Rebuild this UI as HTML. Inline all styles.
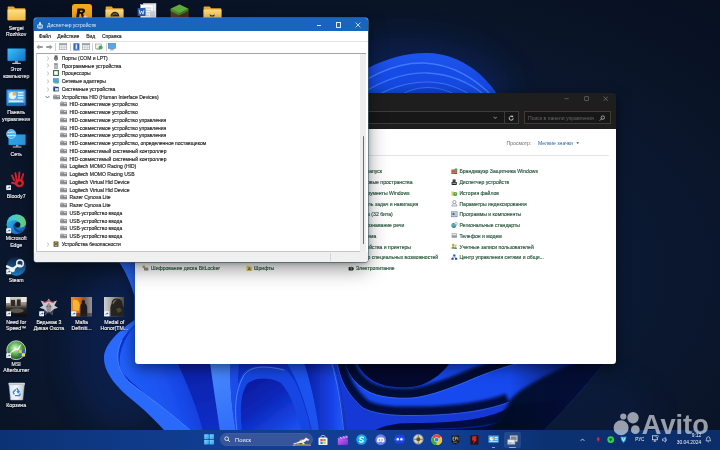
<!DOCTYPE html>
<html lang="ru">
<head>
<meta charset="utf-8">
<title>Desktop</title>
<style>
html,body{margin:0;padding:0;}
body{width:720px;height:450px;overflow:hidden;position:relative;background:#08142a;font-family:"Liberation Sans",sans-serif;}
.abs{position:absolute;}
#stage{position:absolute;left:0;top:0;width:720px;height:450px;overflow:hidden;filter:blur(0.38px);}
#wall{position:absolute;left:0;top:0;width:720px;height:450px;}
.dl{position:absolute;width:44px;text-align:center;color:#f2f4f8;font-size:5.2px;line-height:6.8px;white-space:nowrap;text-shadow:0 0 1px #000,0 0.5px 1px #000;-webkit-text-stroke:0.15px #f2f4f8;}
#dm{position:absolute;left:34px;top:18.2px;width:333.8px;height:244.2px;background:#fff;border-radius:3px;box-shadow:0 7px 20px rgba(0,0,0,0.42),0 1px 5px rgba(0,0,0,0.25),0 0 0 0.7px rgba(100,150,170,0.85);overflow:hidden;}
#dm .tb{position:absolute;left:0;top:0;width:100%;height:13px;background:#1766bd;}
#dm .title{position:absolute;left:13px;top:4.2px;font-size:5px;line-height:6px;color:#e4eefb;white-space:nowrap;}
#dm .menu{position:absolute;font-size:5px;line-height:6px;color:#1c1c1c;white-space:nowrap;-webkit-text-stroke:0.15px #1c1c1c;}
#dm .row{position:absolute;font-size:5px;line-height:6px;color:#242424;white-space:nowrap;-webkit-text-stroke:0.15px #242424;}
#cp{position:absolute;left:134.5px;top:93px;width:481.3px;height:270.5px;background:linear-gradient(#1e1e1e 0,#1e1e1e 36px,#fff 36px,#fff 100%);border-radius:3.5px;box-shadow:0 4px 14px rgba(0,0,0,0.5);overflow:hidden;}
#cp .hd{position:absolute;left:0;top:0;width:100%;height:36px;background:#1e1e1e;}
#cp .it{position:absolute;font-size:5.1px;line-height:6px;color:#28563c;white-space:nowrap;-webkit-text-stroke:0.15px #28563c;}
#tb{position:absolute;left:0;top:430px;width:720px;height:20px;background:linear-gradient(90deg,#0c3274 0%,#0f3a88 18%,#113e94 32%,#113e94 62%,#0c3172 76%,#0b2d69 100%);}
#tb .t{position:absolute;color:#eef2fa;font-size:4.9px;line-height:6px;white-space:nowrap;}
</style>
</head>
<body>
<div id="stage">
<svg id="wall" viewBox="0 0 720 450">
<defs>
<radialGradient id="bgG" cx="0.5" cy="0.6" r="0.8">
<stop offset="0" stop-color="#0c2250"/><stop offset="0.38" stop-color="#0b1a36"/><stop offset="0.7" stop-color="#0a1529"/><stop offset="1" stop-color="#070f1f"/>
</radialGradient>
</defs>
<rect width="720" height="450" fill="url(#bgG)"/>
<defs>
<filter id="b05" x="-10%" y="-10%" width="120%" height="120%"><feGaussianBlur stdDeviation="0.45"/></filter>
<filter id="b1" x="-10%" y="-10%" width="120%" height="120%"><feGaussianBlur stdDeviation="0.7"/></filter>
<filter id="b2" x="-20%" y="-20%" width="140%" height="140%"><feGaussianBlur stdDeviation="1.8"/></filter>
<filter id="b3" x="-30%" y="-30%" width="160%" height="160%"><feGaussianBlur stdDeviation="3"/></filter>
<filter id="b12" x="-30%" y="-30%" width="160%" height="160%"><feGaussianBlur stdDeviation="14"/></filter>
<linearGradient id="domeG" x1="0" y1="0" x2="0" y2="1"><stop offset="0" stop-color="#1d54ee"/><stop offset="1" stop-color="#1443dc"/></linearGradient>
<linearGradient id="archIn" x1="0.1" y1="0" x2="0.9" y2="1"><stop offset="0" stop-color="#091a9c"/><stop offset="0.45" stop-color="#0c28bc"/><stop offset="1" stop-color="#1c50f4"/></linearGradient>
<linearGradient id="leftBand" x1="0" y1="0" x2="1" y2="0.6"><stop offset="0" stop-color="#1c54ec"/><stop offset="1" stop-color="#2c6cff"/></linearGradient>
<linearGradient id="midG" x1="0.2" y1="0" x2="0.7" y2="1"><stop offset="0" stop-color="#0a25b2"/><stop offset="0.5" stop-color="#0f36d4"/><stop offset="1" stop-color="#1d54f4"/></linearGradient>
<linearGradient id="st1" x1="0" y1="0" x2="1" y2="0"><stop offset="0" stop-color="#0a1fa2"/><stop offset="0.75" stop-color="#1844e8"/><stop offset="1" stop-color="#2458f6"/></linearGradient>
<linearGradient id="st2" x1="0" y1="0" x2="1" y2="0"><stop offset="0" stop-color="#1e50f2"/><stop offset="1" stop-color="#08187c"/></linearGradient>
<linearGradient id="fadeR" x1="0" y1="0" x2="1" y2="0"><stop offset="0" stop-color="#050c36" stop-opacity="0"/><stop offset="0.5" stop-color="#050c38" stop-opacity="0.6"/><stop offset="1" stop-color="#060f34" stop-opacity="0.9"/></linearGradient>
<linearGradient id="petL" gradientUnits="userSpaceOnUse" x1="125" y1="400" x2="195" y2="375"><stop offset="0" stop-color="#2262fa"/><stop offset="0.6" stop-color="#1a50ee"/><stop offset="1" stop-color="#1238d6"/></linearGradient>
<linearGradient id="dkB" gradientUnits="userSpaceOnUse" x1="190" y1="360" x2="210" y2="431"><stop offset="0" stop-color="#0a20a6"/><stop offset="1" stop-color="#0d2ec8"/></linearGradient>
<linearGradient id="ltP" gradientUnits="userSpaceOnUse" x1="212" y1="360" x2="234" y2="431"><stop offset="0" stop-color="#4a8cff"/><stop offset="1" stop-color="#2f6cf8"/></linearGradient>
<clipPath id="clipR"><path d="M330 255 L605 255 L605 362 C584 388,562 412,543 431 L347 431 C345 405,339 380,333 362 Z"/></clipPath>
</defs>
<!-- glow behind bloom -->
<ellipse cx="405" cy="90" rx="105" ry="52" fill="#0b2f86" opacity="0.34" filter="url(#b12)"/>
<ellipse cx="120" cy="350" rx="50" ry="80" fill="#0c2f80" opacity="0.3" filter="url(#b12)"/>
<ellipse cx="585" cy="415" rx="70" ry="40" fill="#0c2860" opacity="0.18" filter="url(#b12)"/>
<!-- top dome -->
<g filter="url(#b05)">
<path d="M330 100 C345 76,388 52,428 53 C456 54,481 69,499 97 Z" fill="url(#domeG)"/>
<path d="M340 100 C362 78,395 62,424 63 C452 64,476 79,493 97" fill="#184ce6" stroke="#4279fa" stroke-width="1.4"/>
<path d="M352 100 C375 84,400 72,427 73 C452 74,472 84,487 97" fill="#1648e2" stroke="#3f76f8" stroke-width="1.3"/>
<path d="M368 100 C388 89,405 82,427 82 C447 82,462 89,474 97" fill="#1444dc" stroke="#3c72f5" stroke-width="1.2"/>
<path d="M392 100 C405 91,415 87.5,427 87.5 C440 87.5,450 91,460 97" fill="#123ed4" stroke="#396df0" stroke-width="1.1"/>
</g>
<!-- bottom bloom: left part -->
<g filter="url(#b05)">
<path d="M119 262 C126 272,131 284,134.5 296 L134.5 320 C120 330,104 344,104 358 C104 373,118 388,130 398 C145 410,155 420,165 431 L350 431 L340 262 Z" fill="#0d33d4"/>
<!-- outer band -->
<path d="M119 262 C126 272,131 284,134.5 296 L134.5 320 C120 330,104 344,104 358 C104 373,118 388,130 398 C145 410,155 420,165 431 L191 431 C172 414,150 398,130 383 C118 372,114 356,122 340 C128 330,136 324,140 320 L140 262 Z" fill="#2b6afb"/>
<!-- inner bright petal -->
<path d="M140 300 L140 320 C128 330,114 356,122 372 C126 378,150 398,191 431 L203 431 C198 410,188 385,174 355 L160 300 Z" fill="url(#petL)"/>
<path d="M122 340 C114 356,118 372,130 383 C150 398,172 414,191 431" fill="none" stroke="#5a94ff" stroke-width="0.9" opacity="0.75"/>
<!-- dark band -->
<path d="M174 355 C188 385,198 410,203 431 L220 431 C217 410,213 385,209 355 Z" fill="url(#dkB)"/>
<!-- light petal -->
<path d="M209 355 C213 385,217 410,220 431 L236 431 C232 410,229 385,231 355 Z" fill="url(#ltP)"/>
<path d="M231 355 C229 385,232 410,236 431 L242 431 C238 410,236 385,240 355 Z" fill="#1d4eea"/>
<!-- arch -->
<path d="M236 431 C233 410,233 392,242 375 C248 366,260 363,285 369 C296 378,304 400,311 431 Z" fill="#1946e4"/>
<path d="M237 431 C234.5 410,234.5 392,243.5 376 C249 367,262 364.5,284 370" fill="none" stroke="#4a86ff" stroke-width="1"/>
<path d="M242 431 C240 410,240 395,247 384 C254 377,270 377,281 383 C291 394,297 412,301 431 Z" fill="url(#archIn)"/>
<!-- strips right of arch -->
<path d="M286 362 C297 378,305 400,312 431 L320 431 C316 405,310 380,304 362 Z" fill="#1f52ee"/>
<path d="M304 362 C310 380,316 405,319 431 L343 431 C341 405,336 380,331 362 Z" fill="url(#st1)"/>
<path d="M331 362 C336 380,341 405,343 431 L358 431 C354 405,349 380,345 362 Z" fill="url(#st2)"/>
<path d="M331.5 362 C336.5 380,341.5 405,343.5 431" fill="none" stroke="#4a80ff" stroke-width="0.8"/>
</g>
<!-- right region: nested bowls -->
<g clip-path="url(#clipR)">
<rect x="330" y="255" width="280" height="180" fill="#04092e"/>
<!-- ridge a -->
<path d="M354 355 C358 370,368 381,385 385.5 C397 388,412 388,421 385 C434 380,444 372,452 360 L610 355 L610 435 L330 435 L330 355 Z" fill="#1846ea" filter="url(#b05)"/>
<!-- shadow above rim b -->
<path d="M343 355 C346 372,353 383,368 391.5 C378 397,395 399,413 398 C430 396,452 388,475 378 C492 371,512 364,540 358" fill="none" stroke="#040a34" stroke-width="20" filter="url(#b2)"/>
<!-- ridge b -->
<path d="M343 355 C346 372,353 383,368 391.5 C378 397,395 399,413 398 C430 396,452 388,475 378 C492 371,512 364,540 358 L610 355 L610 435 L330 435 L330 355 Z" fill="#1848ee" filter="url(#b05)"/>
<path d="M343 355 C346 372,353 383,368 391.5 C378 397,395 399,413 398 C430 396,452 388,475 378 C492 371,512 364,540 358" fill="none" stroke="#3a6cff" stroke-width="0.9" filter="url(#b05)"/>
<!-- shadow above rim c -->
<path d="M336 355 C339 378,345 392,363 408 C372 413,390 416,413 415.5 C435 415.5,462 414,483 409.5 C495 407,503 404.5,509 402" fill="none" stroke="#050c3c" stroke-width="18" filter="url(#b2)"/>
<!-- ridge c -->
<path d="M336 355 C339 378,345 392,363 408 C372 413,390 416,413 415.5 C435 415.5,462 414,483 409.5 C495 407,503 404.5,509 402 L560 402 L560 435 L330 435 L330 355 Z" fill="#1238d4" filter="url(#b05)"/>
<path d="M336 355 C339 378,345 392,363 408 C372 413,390 416,413 415.5 C435 415.5,462 414,483 409.5 C495 407,503 404.5,509 402" fill="none" stroke="#3566fa" stroke-width="0.8" filter="url(#b05)"/>
<!-- dark bottom under ridge c -->
<path d="M366 437 C376 427,392 423,413 423 C440 423,465 421.5,486 416.5 C498 413.5,506 410,512 405 L565 400 L565 437 Z" fill="#050c40" filter="url(#b1)"/>
<path d="M380 437 C392 431,420 429,450 428.5 C480 428,500 424,520 414" fill="none" stroke="#0d2fb8" stroke-width="1.2" opacity="0.6" filter="url(#b1)"/>
<!-- right fade to dark -->
<path d="M509 402 C515 392,538 378,585 358 L610 355 L610 435 L480 435 C495 425,505 412,509 402 Z" fill="#040926" opacity="0.94" filter="url(#b2)"/>
<rect x="510" y="355" width="100" height="80" fill="url(#fadeR)"/>
</g>

</svg>
<!--ICONS-->
<svg class="abs" style="left:6.80px;top:6.00px" width="19" height="15" viewBox="0 0 19 15"><defs><linearGradient id="fg00" x1="0" y1="0" x2="0" y2="1"><stop offset="0" stop-color="#ffe08a"/><stop offset="1" stop-color="#f3bb3e"/></linearGradient></defs><path d="M0.6 1.4Q0.6 0.5 1.5 0.5H6.5L8.3 2.3H17.5Q18.4 2.3 18.4 3.2V13.4Q18.4 14.3 17.5 14.3H1.5Q0.6 14.3 0.6 13.4Z" fill="#e9a92c"/><path d="M0.6 4.3Q0.6 3.4 1.5 3.4H17.5Q18.4 3.4 18.4 4.3V13.4Q18.4 14.3 17.5 14.3H1.5Q0.6 14.3 0.6 13.4Z" fill="url(#fg00)"/></svg>
<div class="dl" style="left:-5.80px;top:24.60px">Sergei<br>Rozhkov</div>
<svg class="abs" style="left:6.80px;top:48.00px" width="19" height="17" viewBox="0 0 19 17"><defs><linearGradient id="pcg" x1="0" y1="0" x2="1" y2="1"><stop offset="0" stop-color="#39c2f5"/><stop offset="1" stop-color="#1479d4"/></linearGradient></defs><rect x="0.5" y="0.5" width="18" height="12.4" rx="0.8" fill="url(#pcg)" stroke="#1a5fa8" stroke-width="0.5"/><rect x="8" y="12.9" width="3" height="2" fill="#8fa0b0"/><rect x="5.2" y="14.8" width="8.6" height="1.2" rx="0.5" fill="#b8c4d0"/></svg>
<div class="dl" style="left:-5.80px;top:66.40px">Этот<br>компьютер</div>
<svg class="abs" style="left:6.20px;top:89.40px" width="20.4" height="17.4" viewBox="0 0 20.4 17.4"><rect x="0.5" y="0.5" width="19.4" height="16.2" rx="1" fill="#2e86d6" stroke="#1b5fae" stroke-width="0.6"/><rect x="1.8" y="1.8" width="16.8" height="12.4" fill="#5fb6ee"/><circle cx="6.6" cy="6.6" r="3.6" fill="#e9f4fc"/><path d="M6.6 6.6V3A3.6 3.6 0 0 1 10.2 6.6Z" fill="#f0b63a"/><rect x="12" y="3" width="5.4" height="1.4" fill="#e6f2fb"/><rect x="12" y="5.6" width="5.4" height="1.4" fill="#e6f2fb"/><rect x="12" y="8.2" width="5.4" height="1.4" fill="#e6f2fb"/><rect x="3" y="11.4" width="14" height="1.6" fill="#d9ecf9"/><rect x="1.8" y="14.2" width="16.8" height="1.6" fill="#1d63b4"/></svg>
<div class="dl" style="left:-5.80px;top:109.40px">Панель<br>управления</div>
<svg class="abs" style="left:6.20px;top:129.20px" width="20.4" height="19.4" viewBox="0 0 20.4 19.4"><rect x="2.6" y="5.4" width="17" height="10.6" rx="0.8" fill="#2f9fe6" stroke="#1a6bb8" stroke-width="0.5"/><rect x="10" y="16" width="2.4" height="1.6" fill="#90a0b0"/><rect x="6.6" y="17.4" width="9" height="1.2" rx="0.5" fill="#c0ccd8"/><circle cx="5.2" cy="5" r="4.6" fill="#4db4ee"/><path d="M2 3.2C4 4.6 6 2 8.4 3.4M1.4 6.4C3.6 7.6 6.6 5.4 9.2 6.6" stroke="#d8f0fc" stroke-width="1" fill="none"/><circle cx="5.2" cy="5" r="4.6" fill="none" stroke="#bfe4f8" stroke-width="0.6"/></svg>
<div class="dl" style="left:-5.80px;top:150.60px">Сеть</div>
<svg class="abs" style="left:7.60px;top:170.80px" width="19" height="19" viewBox="0 0 19 19"><g fill="#d8222c"><ellipse cx="11.4" cy="12" rx="4.6" ry="4.2"/><rect x="4.2" y="3.4" width="1.9" height="7" rx="0.9" transform="rotate(-24 5.2 7)"/><rect x="7" y="1.2" width="1.9" height="8.6" rx="0.9" transform="rotate(-10 8 5.4)"/><rect x="10.2" y="0.6" width="1.9" height="8.6" rx="0.9" transform="rotate(4 11.2 5)"/><rect x="13.4" y="2" width="1.9" height="7.6" rx="0.9" transform="rotate(18 14.4 6)"/><rect x="3" y="11.2" width="6" height="2" rx="1" transform="rotate(14 6 12.2)"/></g><circle cx="11.6" cy="12.2" r="1.8" fill="#0a1628"/></svg>
<svg class="abs" style="left:6.00px;top:184.80px" width="5.4" height="5.4" viewBox="0 0 5.4 5.4"><rect x="0.2" y="0.2" width="5" height="5" rx="0.6" fill="#f4f6fa"/><path d="M1.4 4.2C1.5 2.8 2.3 2 3.4 2V1.2L4.6 2.5L3.4 3.8V3C2.6 3 1.9 3.4 1.4 4.2Z" fill="#2a6fd0"/></svg>
<div class="dl" style="left:-5.80px;top:192.60px">Bloody7</div>
<svg class="abs" style="left:6.00px;top:213.80px" width="20.6" height="20.6" viewBox="0 0 20.6 20.6"><defs><linearGradient id="eg1" x1="0" y1="0" x2="1" y2="1"><stop offset="0" stop-color="#36c4d8"/><stop offset="0.5" stop-color="#1f8fd8"/><stop offset="1" stop-color="#1554b0"/></linearGradient><linearGradient id="eg2" x1="0" y1="0" x2="1" y2="0"><stop offset="0" stop-color="#35c1f1"/><stop offset="1" stop-color="#6fdc7a"/></linearGradient></defs><circle cx="10.3" cy="10.3" r="9.8" fill="url(#eg1)"/><path d="M1 9C2 3.6 6.4 0.5 10.8 0.5C16 0.5 20 4.4 20 8.8C20 11.6 17.8 13.4 15.2 13.4C13 13.4 12.2 12.2 12.6 11.2C13.4 9.6 12.8 6.6 9.4 6.2C5.4 5.8 2 7.4 1 9Z" fill="url(#eg2)"/><path d="M8.2 9.4C6.6 12 7.6 16 11 18C13.6 19.2 16.6 18.4 18.4 16C15 17.4 11 16.6 9.6 13.6C9 12.2 9 10.8 9.8 9.6Z" fill="#0f4a98"/><circle cx="11.6" cy="10.8" r="2.8" fill="#0c1a30"/></svg>
<svg class="abs" style="left:5.80px;top:228.20px" width="5.4" height="5.4" viewBox="0 0 5.4 5.4"><rect x="0.2" y="0.2" width="5" height="5" rx="0.6" fill="#f4f6fa"/><path d="M1.4 4.2C1.5 2.8 2.3 2 3.4 2V1.2L4.6 2.5L3.4 3.8V3C2.6 3 1.9 3.4 1.4 4.2Z" fill="#2a6fd0"/></svg>
<div class="dl" style="left:-5.80px;top:234.80px">Microsoft<br>Edge</div>
<svg class="abs" style="left:6.00px;top:255.80px" width="20.6" height="20.6" viewBox="0 0 20.6 20.6"><defs><linearGradient id="stg" x1="0" y1="0" x2="0" y2="1"><stop offset="0" stop-color="#111d3e"/><stop offset="1" stop-color="#1a7fc0"/></linearGradient></defs><circle cx="10.3" cy="10.3" r="9.6" fill="url(#stg)"/><path d="M0.8 10.4L7 13.2L11.4 9.4L14.4 9.6" stroke="#f2f4f8" stroke-width="2.4" fill="none" stroke-linecap="round"/><circle cx="14" cy="7.4" r="3.3" fill="none" stroke="#f2f4f8" stroke-width="1.5"/><circle cx="6.6" cy="13.8" r="2.4" fill="#f2f4f8"/></svg>
<svg class="abs" style="left:5.80px;top:269.40px" width="5.4" height="5.4" viewBox="0 0 5.4 5.4"><rect x="0.2" y="0.2" width="5" height="5" rx="0.6" fill="#f4f6fa"/><path d="M1.4 4.2C1.5 2.8 2.3 2 3.4 2V1.2L4.6 2.5L3.4 3.8V3C2.6 3 1.9 3.4 1.4 4.2Z" fill="#2a6fd0"/></svg>
<div class="dl" style="left:-5.80px;top:277.00px">Steam</div>
<svg class="abs" style="left:6.00px;top:297.00px" width="20.6" height="19.6" viewBox="0 0 20.6 19.6"><defs><linearGradient id="nfg" x1="0" y1="0" x2="0" y2="1"><stop offset="0" stop-color="#d8d4cc"/><stop offset="0.38" stop-color="#8a8478"/><stop offset="0.6" stop-color="#2a2622"/><stop offset="1" stop-color="#0c0c0e"/></linearGradient></defs><rect width="20.6" height="19.6" fill="url(#nfg)"/><rect x="0" y="0" width="4" height="6" fill="#f4f2ee"/><rect x="15" y="0" width="5.6" height="5" fill="#e8e6e0"/><path d="M5 3H9V9H5ZM11 2.4H14.6V9H11Z" fill="#2e2a26"/><ellipse cx="10.8" cy="13.6" rx="7" ry="2.4" fill="#5a5650"/></svg>
<svg class="abs" style="left:6.00px;top:311.20px" width="5.4" height="5.4" viewBox="0 0 5.4 5.4"><rect x="0.2" y="0.2" width="5" height="5" rx="0.6" fill="#f4f6fa"/><path d="M1.4 4.2C1.5 2.8 2.3 2 3.4 2V1.2L4.6 2.5L3.4 3.8V3C2.6 3 1.9 3.4 1.4 4.2Z" fill="#2a6fd0"/></svg>
<div class="dl" style="left:-5.80px;top:318.60px">Need for<br>Speed™</div>
<svg class="abs" style="left:39.10px;top:298.00px" width="19.6" height="19" viewBox="0 0 19.6 19"><path d="M9.8 0.8L12.6 4.4L18 2.6L15.4 7.6L19 9.8L14.6 11.2L13.2 17L9.8 13.6L6.4 17L5 11.2L0.6 9.8L4.2 7.6L1.6 2.6L7 4.4Z" fill="#c4c8d0"/><path d="M9.8 4.6L12.6 8.4L11.6 13.4L9.8 15.4L8 13.4L7 8.4Z" fill="#8e929c"/><path d="M5 11.2L6.4 17L9.8 13.6L13.2 17L14.6 11.2L9.8 15.4Z" fill="#3a3c44"/><circle cx="8.4" cy="8.4" r="0.8" fill="#e0322a"/><circle cx="11.2" cy="8.4" r="0.8" fill="#e0322a"/><path d="M4.6 4.4L9.8 2.8L15 4.4" stroke="#c0384a" stroke-width="1.1" fill="none"/></svg>
<svg class="abs" style="left:39.10px;top:311.20px" width="5.4" height="5.4" viewBox="0 0 5.4 5.4"><rect x="0.2" y="0.2" width="5" height="5" rx="0.6" fill="#f4f6fa"/><path d="M1.4 4.2C1.5 2.8 2.3 2 3.4 2V1.2L4.6 2.5L3.4 3.8V3C2.6 3 1.9 3.4 1.4 4.2Z" fill="#2a6fd0"/></svg>
<div class="dl" style="left:26.90px;top:318.60px">Ведьмак 3<br>Дикая Охота</div>
<svg class="abs" style="left:71.00px;top:297.20px" width="21.2" height="19.4" viewBox="0 0 21.2 19.4"><defs><linearGradient id="mfg" x1="0" y1="0" x2="1" y2="0"><stop offset="0" stop-color="#f08a22"/><stop offset="0.4" stop-color="#d8641c"/><stop offset="0.62" stop-color="#7a5a4a"/><stop offset="1" stop-color="#8a9aa8"/></linearGradient></defs><rect width="21.2" height="19.4" fill="url(#mfg)"/><path d="M2 4C3.6 1 5 5 6 2.4C7.4 5.6 8.4 3.6 8.8 8L8 14L2 13Z" fill="#f8c23a" opacity="0.85"/><path d="M9.4 19.4V10C9.4 7.6 10.2 6.6 11 6.2C10.4 4.8 10.8 3 12.4 3C14 3 14.4 4.8 13.8 6.2C15 6.8 16 8 16.2 10.4V19.4Z" fill="#1c1a1c"/><rect x="0" y="16" width="21.2" height="3.4" fill="#2a2420" opacity="0.55"/></svg>
<svg class="abs" style="left:71.20px;top:311.20px" width="5.4" height="5.4" viewBox="0 0 5.4 5.4"><rect x="0.2" y="0.2" width="5" height="5" rx="0.6" fill="#f4f6fa"/><path d="M1.4 4.2C1.5 2.8 2.3 2 3.4 2V1.2L4.6 2.5L3.4 3.8V3C2.6 3 1.9 3.4 1.4 4.2Z" fill="#2a6fd0"/></svg>
<div class="dl" style="left:59.60px;top:318.60px">Mafia<br>Definiti...</div>
<svg class="abs" style="left:104.10px;top:297.20px" width="20.4" height="19.4" viewBox="0 0 20.4 19.4"><defs><linearGradient id="mhg" x1="0" y1="0" x2="1" y2="0"><stop offset="0" stop-color="#d2d0cc"/><stop offset="0.35" stop-color="#a8a6a2"/><stop offset="1" stop-color="#4a4844"/></linearGradient></defs><rect width="20.4" height="19.4" fill="url(#mhg)"/><path d="M6.4 19.4V13C6 10 7 8 7.6 6.4C7.6 3 10 1.2 13 1.4C16.6 1.6 18.6 4 18.4 7C19.6 9 20.4 12 20.4 14V19.4Z" fill="#26241f"/><path d="M8.4 6.2C9 3.6 11 2.4 13.4 2.6C12 3.6 10.4 5 9.6 7.6Z" fill="#6a6456"/><path d="M12 12L16 10.6L18 14L14 16Z" fill="#4a4636"/></svg>
<svg class="abs" style="left:104.10px;top:311.20px" width="5.4" height="5.4" viewBox="0 0 5.4 5.4"><rect x="0.2" y="0.2" width="5" height="5" rx="0.6" fill="#f4f6fa"/><path d="M1.4 4.2C1.5 2.8 2.3 2 3.4 2V1.2L4.6 2.5L3.4 3.8V3C2.6 3 1.9 3.4 1.4 4.2Z" fill="#2a6fd0"/></svg>
<div class="dl" style="left:92.30px;top:318.60px">Medal of<br>Honor(TM...</div>
<svg class="abs" style="left:6.20px;top:339.60px" width="20.4" height="20.4" viewBox="0 0 20.4 20.4"><defs><radialGradient id="msg" cx="0.45" cy="0.4" r="0.6"><stop offset="0" stop-color="#e8f4e0"/><stop offset="0.45" stop-color="#6ac05a"/><stop offset="1" stop-color="#1c4a1e"/></radialGradient></defs><circle cx="10.2" cy="10.2" r="9.4" fill="url(#msg)" stroke="#c8ccd0" stroke-width="1"/><path d="M3 14L9 8L11 9L15.6 3.6L12.6 10.4L10.6 9.8Z" fill="#f4f6f4"/><path d="M12.6 10H19V16.4H12.6Z" fill="#2a6ad0"/><path d="M12.6 10H15.8V13.2H12.6Z" fill="#f2c21c"/><path d="M15.8 13.2H19V16.4H15.8Z" fill="#e8e23a"/></svg>
<svg class="abs" style="left:6.00px;top:352.80px" width="5.4" height="5.4" viewBox="0 0 5.4 5.4"><rect x="0.2" y="0.2" width="5" height="5" rx="0.6" fill="#f4f6fa"/><path d="M1.4 4.2C1.5 2.8 2.3 2 3.4 2V1.2L4.6 2.5L3.4 3.8V3C2.6 3 1.9 3.4 1.4 4.2Z" fill="#2a6fd0"/></svg>
<div class="dl" style="left:-5.80px;top:360.60px">MSI<br>Afterburner</div>
<svg class="abs" style="left:7.60px;top:381.80px" width="17.4" height="19" viewBox="0 0 17.4 19"><defs><linearGradient id="rbg" x1="0" y1="0" x2="1" y2="0"><stop offset="0" stop-color="#dfe6ee"/><stop offset="0.5" stop-color="#f4f7fa"/><stop offset="1" stop-color="#b9c4d0"/></linearGradient></defs><path d="M1 2.4H16.4L14.8 18H2.6Z" fill="url(#rbg)" stroke="#9aa6b4" stroke-width="0.5"/><rect x="0.4" y="0.8" width="16.6" height="2" rx="0.6" fill="#cfd8e2"/><path d="M8.7 6.2L11 9.6H9.6L10.6 11.4M6.2 12.6L5.2 10.2L7.8 7.4M7 13.6H11.6L12.4 11.6" stroke="#2a8ae0" stroke-width="1.3" fill="none"/></svg>
<div class="dl" style="left:-5.80px;top:402.40px">Корзина</div>
<svg class="abs" style="left:71.60px;top:3.60px" width="20" height="20" viewBox="0 0 20 20"><rect width="20" height="20" rx="3" fill="#f7a81c"/><path d="M5.4 4.6H10.2C12.4 4.6 13.2 5.8 13 7.2C12.8 8.4 12 9.2 11 9.4L12.4 13.4H10L8.8 9.8H7.6L7 13.4H4.2ZM8 8H9.6C10.4 8 10.6 7.6 10.7 7.2C10.8 6.6 10.4 6.4 9.8 6.4H8.3Z" fill="#16120c"/><path d="M13 10.4L13.8 12.6H16L14.2 13.8L15 16L13.2 14.6L11.4 16L12.2 13.8L10.6 12.6H12.6Z" fill="#fdfbf5"/></svg>
<svg class="abs" style="left:104.90px;top:6.00px" width="19" height="15" viewBox="0 0 19 15"><defs><linearGradient id="fg30" x1="0" y1="0" x2="0" y2="1"><stop offset="0" stop-color="#ffe08a"/><stop offset="1" stop-color="#f3bb3e"/></linearGradient></defs><path d="M0.6 1.4Q0.6 0.5 1.5 0.5H6.5L8.3 2.3H17.5Q18.4 2.3 18.4 3.2V13.4Q18.4 14.3 17.5 14.3H1.5Q0.6 14.3 0.6 13.4Z" fill="#e9a92c"/><path d="M0.6 4.3Q0.6 3.4 1.5 3.4H17.5Q18.4 3.4 18.4 4.3V13.4Q18.4 14.3 17.5 14.3H1.5Q0.6 14.3 0.6 13.4Z" fill="url(#fg30)"/><path d="M5.4 10.4C5.8 7.2 8 5.6 10.4 5.8C12.6 6 14 7.6 14.4 10.4Z" fill="#2a2624"/><path d="M7 9.6C8 8 10 7.2 12.4 8.4" stroke="#c8a24a" stroke-width="0.8" fill="none"/></svg>
<svg class="abs" style="left:137.00px;top:3.00px" width="20" height="18" viewBox="0 0 20 18"><rect x="6.4" y="0.4" width="12.6" height="15.6" fill="#f2f5f9" stroke="#b8c2ce" stroke-width="0.5"/><rect x="3.6" y="1.6" width="12.6" height="15.6" fill="#fbfcfe" stroke="#b8c2ce" stroke-width="0.5"/><path d="M6 5H14M6 7.4H14M6 9.8H14M6 12.2H12" stroke="#a8b6c6" stroke-width="0.7"/><rect x="0.6" y="5" width="8" height="8" rx="0.8" fill="#2a5fb4"/><path d="M2.2 7L3.2 11.2L4.6 8L6 11.2L7 7" stroke="#fff" stroke-width="0.8" fill="none"/><rect x="13" y="8" width="5" height="5.6" fill="#cdd6e0"/></svg>
<svg class="abs" style="left:170.10px;top:3.60px" width="19" height="19" viewBox="0 0 19 19"><path d="M9.5 0.6L18.4 4.8V13.8L9.5 18.4L0.6 13.8V4.8Z" fill="#5a3c26"/><path d="M9.5 0.6L18.4 4.8L9.5 9.2L0.6 4.8Z" fill="#5fae3a"/><path d="M0.6 4.8L9.5 9.2V11.4L0.6 7Z" fill="#4a9230"/><path d="M18.4 4.8L9.5 9.2V11.4L18.4 7Z" fill="#3d7d28"/><path d="M9.5 11.4V18.4L18.4 13.8V7Z" fill="#4a3020"/></svg>
<svg class="abs" style="left:203.00px;top:6.00px" width="19" height="15" viewBox="0 0 19 15"><defs><linearGradient id="fg60" x1="0" y1="0" x2="0" y2="1"><stop offset="0" stop-color="#ffe08a"/><stop offset="1" stop-color="#f3bb3e"/></linearGradient></defs><path d="M0.6 1.4Q0.6 0.5 1.5 0.5H6.5L8.3 2.3H17.5Q18.4 2.3 18.4 3.2V13.4Q18.4 14.3 17.5 14.3H1.5Q0.6 14.3 0.6 13.4Z" fill="#e9a92c"/><path d="M0.6 4.3Q0.6 3.4 1.5 3.4H17.5Q18.4 3.4 18.4 4.3V13.4Q18.4 14.3 17.5 14.3H1.5Q0.6 14.3 0.6 13.4Z" fill="url(#fg60)"/><path d="M6.4 8.2L9 9.4L12 8.4L11 10.4H7.4Z" fill="#3a3228"/></svg>
<div id="cp">
<div class="hd"></div>
<svg class="abs" style="left:429.9px;top:3.4px" width="5.4" height="5.4" viewBox="0 0 5.4 5.4"><path d="M0.5 2.7H4.7" stroke="#8a8a8a" stroke-width="0.55"/></svg>
<svg class="abs" style="left:449.1px;top:3.4px" width="5.4" height="5.4" viewBox="0 0 5.4 5.4"><rect x="0.6" y="0.6" width="4" height="4" rx="0.6" fill="none" stroke="#8a8a8a" stroke-width="0.55"/></svg>
<svg class="abs" style="left:468.5px;top:3.4px" width="5.4" height="5.4" viewBox="0 0 5.4 5.4"><path d="M0.5 0.5L4.9 4.9M4.9 0.5L0.5 4.9" stroke="#929292" stroke-width="0.55"/></svg>
<div class="abs" style="left:40.5px;top:18px;width:344px;height:13.4px;box-sizing:border-box;border:0.7px solid #3d3d3d;background:#171717"></div>
<div class="abs" style="left:369.1px;top:18px;width:0.7px;height:13.4px;background:#3b3b3b"></div>
<svg class="abs" style="left:358.1px;top:23.3px" width="4.4" height="3.4" viewBox="0 0 4.4 3.4"><path d="M0.6 0.8L2.2 2.5L3.8 0.8" fill="none" stroke="#d0d0d0" stroke-width="0.7"/></svg>
<svg class="abs" style="left:373.1px;top:21.6px" width="6.4" height="6.4" viewBox="0 0 6.4 6.4"><path d="M5.2 3.2A2 2 0 1 1 4.3 1.55" fill="none" stroke="#e2e2e2" stroke-width="0.8"/><path d="M3.6 0.3L5.5 1.3L3.9 2.6Z" fill="#e2e2e2"/></svg>
<div class="abs" style="left:389.9px;top:18px;width:86.39999999999998px;height:13.4px;box-sizing:border-box;border:0.7px solid #423c30;background:#171717"></div>
<div class="abs" style="left:393.5px;top:21.8px;font-size:5.1px;line-height:6px;color:#666;white-space:nowrap">Поиск в панели управления</div>
<svg class="abs" style="left:464.7px;top:21.6px" width="6.4" height="6.4" viewBox="0 0 6.4 6.4"><circle cx="3.8" cy="2.6" r="1.7" fill="none" stroke="#c8c8c8" stroke-width="0.75"/><path d="M2.6 3.8L0.8 5.6" stroke="#c8c8c8" stroke-width="0.85"/></svg>
<div class="abs" style="left:372.1px;top:47.2px;font-size:5.1px;line-height:6px;color:#6a6a6a;white-space:nowrap">Просмотр:</div>
<div class="abs" style="left:403.5px;top:47.2px;font-size:5.1px;line-height:6px;color:#2862a6;white-space:nowrap">Мелкие значки</div>
<svg class="abs" style="left:441.7px;top:49.2px" width="3.4" height="2.4" viewBox="0 0 3.4 2.4"><path d="M0.2 0.3H3.2L1.7 2.1Z" fill="#2862a6"/></svg>
<div class="abs" style="left:7.5px;top:62.4px;width:466.6px;height:0.6px;background:#e4e6ea"></div>
<svg class="abs" style="left:7.5px;top:75.1px" width="7" height="6.6" viewBox="0 0 7 6.6"><rect x="0.5" y="0.8" width="5.6" height="4.8" rx="0.8" fill="#7a8ea6"/><rect x="2.2" y="2.4" width="4" height="3.4" rx="0.6" fill="#b8c4d0"/></svg>
<div class="it" style="left:16.5px;top:75.4px">Автозапуск</div>
<svg class="abs" style="left:7.5px;top:85.83px" width="7" height="6.6" viewBox="0 0 7 6.6"><rect x="0.5" y="0.8" width="5.6" height="4.8" rx="0.8" fill="#7a8ea6"/><rect x="2.2" y="2.4" width="4" height="3.4" rx="0.6" fill="#b8c4d0"/></svg>
<div class="it" style="left:16.5px;top:86.13px">Архивация и восстановление</div>
<svg class="abs" style="left:7.5px;top:96.56px" width="7" height="6.6" viewBox="0 0 7 6.6"><rect x="0.5" y="0.8" width="5.6" height="4.8" rx="0.8" fill="#7a8ea6"/><rect x="2.2" y="2.4" width="4" height="3.4" rx="0.6" fill="#b8c4d0"/></svg>
<div class="it" style="left:16.5px;top:96.86px">Дата и время</div>
<svg class="abs" style="left:7.5px;top:107.29px" width="7" height="6.6" viewBox="0 0 7 6.6"><rect x="0.5" y="0.8" width="5.6" height="4.8" rx="0.8" fill="#7a8ea6"/><rect x="2.2" y="2.4" width="4" height="3.4" rx="0.6" fill="#b8c4d0"/></svg>
<div class="it" style="left:16.5px;top:107.59px">Звук</div>
<svg class="abs" style="left:7.5px;top:118.02px" width="7" height="6.6" viewBox="0 0 7 6.6"><rect x="0.5" y="0.8" width="5.6" height="4.8" rx="0.8" fill="#7a8ea6"/><rect x="2.2" y="2.4" width="4" height="3.4" rx="0.6" fill="#b8c4d0"/></svg>
<div class="it" style="left:16.5px;top:118.32px">Мышь</div>
<svg class="abs" style="left:7.5px;top:128.75px" width="7" height="6.6" viewBox="0 0 7 6.6"><rect x="0.5" y="0.8" width="5.6" height="4.8" rx="0.8" fill="#7a8ea6"/><rect x="2.2" y="2.4" width="4" height="3.4" rx="0.6" fill="#b8c4d0"/></svg>
<div class="it" style="left:16.5px;top:129.05px">Параметры Проводника</div>
<svg class="abs" style="left:7.5px;top:139.48px" width="7" height="6.6" viewBox="0 0 7 6.6"><rect x="0.5" y="0.8" width="5.6" height="4.8" rx="0.8" fill="#7a8ea6"/><rect x="2.2" y="2.4" width="4" height="3.4" rx="0.6" fill="#b8c4d0"/></svg>
<div class="it" style="left:16.5px;top:139.78px">Подключения к удаленным раб...</div>
<svg class="abs" style="left:7.5px;top:150.21px" width="7" height="6.6" viewBox="0 0 7 6.6"><rect x="0.5" y="0.8" width="5.6" height="4.8" rx="0.8" fill="#7a8ea6"/><rect x="2.2" y="2.4" width="4" height="3.4" rx="0.6" fill="#b8c4d0"/></svg>
<div class="it" style="left:16.5px;top:150.51px">Свойства браузера</div>
<svg class="abs" style="left:7.5px;top:160.94px" width="7" height="6.6" viewBox="0 0 7 6.6"><rect x="0.5" y="0.8" width="5.6" height="4.8" rx="0.8" fill="#7a8ea6"/><rect x="2.2" y="2.4" width="4" height="3.4" rx="0.6" fill="#b8c4d0"/></svg>
<div class="it" style="left:16.5px;top:161.24px">Управление цветом</div>
<svg class="abs" style="left:7.5px;top:171.67px" width="7" height="6.6" viewBox="0 0 7 6.6"><rect x="2" y="2.4" width="4.4" height="3.2" rx="0.4" fill="#8a9296"/><circle cx="1.8" cy="1.8" r="1.4" fill="#c8a23a"/><path d="M2.6 2.6L5 5.4" stroke="#b08a2a" stroke-width="0.9"/></svg>
<div class="it" style="left:16.5px;top:171.97px">Шифрование диска BitLocker</div>
<svg class="abs" style="left:111.1px;top:75.1px" width="7" height="6.6" viewBox="0 0 7 6.6"><rect x="0.5" y="0.8" width="5.6" height="4.8" rx="0.8" fill="#7a8ea6"/><rect x="2.2" y="2.4" width="4" height="3.4" rx="0.6" fill="#b8c4d0"/></svg>
<div class="it" style="left:119.3px;top:75.4px">Администрирование</div>
<svg class="abs" style="left:111.1px;top:85.83px" width="7" height="6.6" viewBox="0 0 7 6.6"><rect x="0.5" y="0.8" width="5.6" height="4.8" rx="0.8" fill="#7a8ea6"/><rect x="2.2" y="2.4" width="4" height="3.4" rx="0.6" fill="#b8c4d0"/></svg>
<div class="it" style="left:119.3px;top:86.13px">Брандмауэр</div>
<svg class="abs" style="left:111.1px;top:96.56px" width="7" height="6.6" viewBox="0 0 7 6.6"><rect x="0.5" y="0.8" width="5.6" height="4.8" rx="0.8" fill="#7a8ea6"/><rect x="2.2" y="2.4" width="4" height="3.4" rx="0.6" fill="#b8c4d0"/></svg>
<div class="it" style="left:119.3px;top:96.86px">Диспетчер учетных данных</div>
<svg class="abs" style="left:111.1px;top:107.29px" width="7" height="6.6" viewBox="0 0 7 6.6"><rect x="0.5" y="0.8" width="5.6" height="4.8" rx="0.8" fill="#7a8ea6"/><rect x="2.2" y="2.4" width="4" height="3.4" rx="0.6" fill="#b8c4d0"/></svg>
<div class="it" style="left:119.3px;top:107.59px">История</div>
<svg class="abs" style="left:111.1px;top:118.02px" width="7" height="6.6" viewBox="0 0 7 6.6"><rect x="0.5" y="0.8" width="5.6" height="4.8" rx="0.8" fill="#7a8ea6"/><rect x="2.2" y="2.4" width="4" height="3.4" rx="0.6" fill="#b8c4d0"/></svg>
<div class="it" style="left:119.3px;top:118.32px">Клавиатура</div>
<svg class="abs" style="left:111.1px;top:128.75px" width="7" height="6.6" viewBox="0 0 7 6.6"><rect x="0.5" y="0.8" width="5.6" height="4.8" rx="0.8" fill="#7a8ea6"/><rect x="2.2" y="2.4" width="4" height="3.4" rx="0.6" fill="#b8c4d0"/></svg>
<div class="it" style="left:119.3px;top:129.05px">Панель NVIDIA</div>
<svg class="abs" style="left:111.1px;top:139.48px" width="7" height="6.6" viewBox="0 0 7 6.6"><rect x="0.5" y="0.8" width="5.6" height="4.8" rx="0.8" fill="#7a8ea6"/><rect x="2.2" y="2.4" width="4" height="3.4" rx="0.6" fill="#b8c4d0"/></svg>
<div class="it" style="left:119.3px;top:139.78px">Подключения</div>
<svg class="abs" style="left:111.1px;top:150.21px" width="7" height="6.6" viewBox="0 0 7 6.6"><rect x="0.5" y="0.8" width="5.6" height="4.8" rx="0.8" fill="#7a8ea6"/><rect x="2.2" y="2.4" width="4" height="3.4" rx="0.6" fill="#b8c4d0"/></svg>
<div class="it" style="left:119.3px;top:150.51px">Резервное копирование</div>
<svg class="abs" style="left:111.1px;top:160.94px" width="7" height="6.6" viewBox="0 0 7 6.6"><rect x="0.5" y="0.8" width="5.6" height="4.8" rx="0.8" fill="#7a8ea6"/><rect x="2.2" y="2.4" width="4" height="3.4" rx="0.6" fill="#b8c4d0"/></svg>
<div class="it" style="left:119.3px;top:161.24px">Устранение неполадок</div>
<svg class="abs" style="left:111.1px;top:171.67px" width="7" height="6.6" viewBox="0 0 7 6.6"><path d="M0.4 0.8H2.8L3.4 1.6H6.2V6H0.4Z" fill="#ecd46a"/><path d="M2 5.4L3.3 2.2L4.6 5.4M2.5 4.3H4.1" stroke="#4a4a3a" stroke-width="0.6" fill="none"/></svg>
<div class="it" style="left:119.3px;top:171.97px">Шрифты</div>
<svg class="abs" style="left:213.1px;top:75.1px" width="7" height="6.6" viewBox="0 0 7 6.6"><rect x="0.5" y="0.8" width="5.6" height="4.8" rx="0.8" fill="#7a8ea6"/><rect x="2.2" y="2.4" width="4" height="3.4" rx="0.6" fill="#b8c4d0"/></svg>
<div class="it" style="left:221.3px;top:75.4px">Автозапуск</div>
<svg class="abs" style="left:213.1px;top:85.83px" width="7" height="6.6" viewBox="0 0 7 6.6"><rect x="0.5" y="0.8" width="5.6" height="4.8" rx="0.8" fill="#7a8ea6"/><rect x="2.2" y="2.4" width="4" height="3.4" rx="0.6" fill="#b8c4d0"/></svg>
<div class="it" style="left:221.3px;top:86.13px">Дисковые пространства</div>
<svg class="abs" style="left:213.1px;top:96.56px" width="7" height="6.6" viewBox="0 0 7 6.6"><rect x="0.5" y="0.8" width="5.6" height="4.8" rx="0.8" fill="#7a8ea6"/><rect x="2.2" y="2.4" width="4" height="3.4" rx="0.6" fill="#b8c4d0"/></svg>
<div class="it" style="left:221.3px;top:96.86px">Инструменты Windows</div>
<svg class="abs" style="left:213.1px;top:107.29px" width="7" height="6.6" viewBox="0 0 7 6.6"><rect x="0.5" y="0.8" width="5.6" height="4.8" rx="0.8" fill="#7a8ea6"/><rect x="2.2" y="2.4" width="4" height="3.4" rx="0.6" fill="#b8c4d0"/></svg>
<div class="it" style="left:221.3px;top:107.59px">Панель задач и навигация</div>
<svg class="abs" style="left:213.1px;top:118.02px" width="7" height="6.6" viewBox="0 0 7 6.6"><rect x="0.5" y="0.8" width="5.6" height="4.8" rx="0.8" fill="#7a8ea6"/><rect x="2.2" y="2.4" width="4" height="3.4" rx="0.6" fill="#b8c4d0"/></svg>
<div class="it" style="left:221.3px;top:118.32px">Почта (32 бита)</div>
<svg class="abs" style="left:213.1px;top:128.75px" width="7" height="6.6" viewBox="0 0 7 6.6"><rect x="0.5" y="0.8" width="5.6" height="4.8" rx="0.8" fill="#7a8ea6"/><rect x="2.2" y="2.4" width="4" height="3.4" rx="0.6" fill="#b8c4d0"/></svg>
<div class="it" style="left:221.3px;top:129.05px">Распознавание речи</div>
<svg class="abs" style="left:213.1px;top:139.48px" width="7" height="6.6" viewBox="0 0 7 6.6"><rect x="0.5" y="0.8" width="5.6" height="4.8" rx="0.8" fill="#7a8ea6"/><rect x="2.2" y="2.4" width="4" height="3.4" rx="0.6" fill="#b8c4d0"/></svg>
<div class="it" style="left:221.3px;top:139.78px">Система</div>
<svg class="abs" style="left:213.1px;top:150.21px" width="7" height="6.6" viewBox="0 0 7 6.6"><rect x="0.5" y="0.8" width="5.6" height="4.8" rx="0.8" fill="#7a8ea6"/><rect x="2.2" y="2.4" width="4" height="3.4" rx="0.6" fill="#b8c4d0"/></svg>
<div class="it" style="left:221.3px;top:150.51px">Устройства и принтеры</div>
<svg class="abs" style="left:213.1px;top:160.94px" width="7" height="6.6" viewBox="0 0 7 6.6"><rect x="0.5" y="0.8" width="5.6" height="4.8" rx="0.8" fill="#7a8ea6"/><rect x="2.2" y="2.4" width="4" height="3.4" rx="0.6" fill="#b8c4d0"/></svg>
<div class="it" style="left:221.3px;top:161.24px">Центр специальных возможностей</div>
<svg class="abs" style="left:213.1px;top:171.67px" width="7" height="6.6" viewBox="0 0 7 6.6"><rect x="0.6" y="2" width="4.6" height="3.4" rx="0.5" fill="#2e3a30"/><rect x="5.2" y="2.9" width="0.8" height="1.6" fill="#2e3a30"/><path d="M3.6 0.4L2 3.4H3.2L2.6 6L4.6 2.8H3.4Z" fill="#6aa85a"/></svg>
<div class="it" style="left:221.3px;top:171.97px">Электропитание</div>
<svg class="abs" style="left:316.5px;top:75.1px" width="7" height="6.6" viewBox="0 0 7 6.6"><rect x="0.4" y="1.6" width="5.6" height="4.4" fill="#b83a30"/><path d="M0.4 3H6M0.4 4.5H6M2.2 1.6V3M4.2 3V4.5M2.2 4.5V6" stroke="#e8b0a8" stroke-width="0.4"/><circle cx="5" cy="1.8" r="1.5" fill="#5a9a5a"/></svg>
<div class="it" style="left:324.9px;top:75.4px">Брандмауэр Защитника Windows</div>
<svg class="abs" style="left:316.5px;top:85.83px" width="7" height="6.6" viewBox="0 0 7 6.6"><rect x="1.6" y="0.4" width="3" height="3" fill="#3a3e44"/><rect x="0.6" y="3" width="5.2" height="3" rx="0.4" fill="#24272c"/><rect x="1.4" y="3.8" width="3.6" height="0.9" fill="#c8ccd2"/></svg>
<div class="it" style="left:324.9px;top:86.13px">Диспетчер устройств</div>
<svg class="abs" style="left:316.5px;top:96.56px" width="7" height="6.6" viewBox="0 0 7 6.6"><path d="M0.4 1.6H2.6L3.2 2.4H6V5.8H0.4Z" fill="#d8d46a"/><circle cx="4.2" cy="4" r="2" fill="#4aa24a"/><path d="M4.2 2.8V4H5.2" stroke="#fff" stroke-width="0.5" fill="none"/></svg>
<div class="it" style="left:324.9px;top:96.86px">История файлов</div>
<svg class="abs" style="left:316.5px;top:107.29px" width="7" height="6.6" viewBox="0 0 7 6.6"><circle cx="3.4" cy="2" r="1.6" fill="none" stroke="#8a929c" stroke-width="0.8"/><path d="M0.8 6C0.8 4.4 2 3.8 3.4 3.8C4.8 3.8 6 4.4 6 6Z" fill="none" stroke="#8a929c" stroke-width="0.8"/></svg>
<div class="it" style="left:324.9px;top:107.59px">Параметры индексирования</div>
<svg class="abs" style="left:316.5px;top:118.02px" width="7" height="6.6" viewBox="0 0 7 6.6"><rect x="0.5" y="0.8" width="5.6" height="5" fill="#e4e8ee" stroke="#5a7088" stroke-width="0.6"/><rect x="1.4" y="1.8" width="2.2" height="2.2" fill="#3a6aa8"/><path d="M4.2 2H5.4M4.2 3.2H5.4M1.4 4.8H5.4" stroke="#7a8896" stroke-width="0.5"/></svg>
<div class="it" style="left:324.9px;top:118.32px">Программы и компоненты</div>
<svg class="abs" style="left:316.5px;top:128.75px" width="7" height="6.6" viewBox="0 0 7 6.6"><circle cx="2.8" cy="3.6" r="2.5" fill="#3a90c8"/><path d="M1 2.8C2 3.6 3.4 2.4 4.6 3.2" stroke="#9ad47a" stroke-width="0.9" fill="none"/><circle cx="5" cy="1.6" r="1.4" fill="#e8eef4" stroke="#6a7a8a" stroke-width="0.4"/></svg>
<div class="it" style="left:324.9px;top:129.05px">Региональные стандарты</div>
<svg class="abs" style="left:316.5px;top:139.48px" width="7" height="6.6" viewBox="0 0 7 6.6"><rect x="0.6" y="1.2" width="5.4" height="4.6" rx="0.5" fill="#a4aab2"/><rect x="1.3" y="2" width="4" height="1.3" fill="#e8ecf0"/><path d="M1.4 4H5.2M1.4 5H5.2" stroke="#5a626c" stroke-width="0.5" stroke-dasharray="0.7 0.5"/></svg>
<div class="it" style="left:324.9px;top:139.78px">Телефон и модем</div>
<svg class="abs" style="left:316.5px;top:150.21px" width="7" height="6.6" viewBox="0 0 7 6.6"><circle cx="2.2" cy="2" r="1.3" fill="#c8a04a"/><path d="M0.4 5.8C0.4 4.2 1.2 3.6 2.2 3.6C3.2 3.6 4 4.2 4 5.8Z" fill="#7a9a3a"/><circle cx="4.6" cy="2.8" r="1.1" fill="#d8b878"/><path d="M3.2 6C3.2 4.8 3.8 4.2 4.6 4.2C5.4 4.2 6 4.8 6 6Z" fill="#5a8a9a"/></svg>
<div class="it" style="left:324.9px;top:150.51px">Учетные записи пользователей</div>
<svg class="abs" style="left:316.5px;top:160.94px" width="7" height="6.6" viewBox="0 0 7 6.6"><rect x="2.2" y="0.5" width="2.2" height="1.8" fill="#2a4ab8"/><rect x="0.4" y="4" width="2.2" height="1.8" fill="#2a4ab8"/><rect x="4" y="4" width="2.2" height="1.8" fill="#2a4ab8"/><path d="M3.3 2.3V3.2M1.5 4V3.2H5.1V4" stroke="#3a5ac8" stroke-width="0.5" fill="none"/></svg>
<div class="it" style="left:324.9px;top:161.24px">Центр управления сетями и общи...</div>
</div>
<div id="dm">
<div class="tb"></div>
<div class="title">Диспетчер устройств</div>
<svg class="abs" style="left:3.2px;top:3.4px" width="6" height="7" viewBox="0 0 6 7"><rect x="0.3" y="2.6" width="5.4" height="3.6" rx="0.4" fill="#e8eef6"/><rect x="1" y="3.3" width="4" height="2.2" fill="#5b8fd0"/><rect x="2" y="0.3" width="2" height="2.6" fill="#dfe6ee"/><rect x="1.5" y="6.2" width="3" height="0.6" fill="#cfd8e4"/></svg>
<div class="abs" style="left:282.5px;top:6.6px;width:4.5px;height:0.7px;background:#dbe8f8"></div>
<div class="abs" style="left:301.8px;top:4.1px;width:3.6px;height:3.6px;border:0.7px solid #dbe8f8"></div>
<svg class="abs" style="left:321.2px;top:3.8px" width="6" height="6" viewBox="0 0 6 6"><path d="M0.6 0.6L5.4 5.4M5.4 0.6L0.6 5.4" stroke="#e6effb" stroke-width="0.8"/></svg>
<div class="menu" style="left:4.7px;top:15.1px">Файл</div>
<div class="menu" style="left:23.3px;top:15.1px">Действие</div>
<div class="menu" style="left:52.2px;top:15.1px">Вид</div>
<div class="menu" style="left:68px;top:15.1px">Справка</div>
<div class="abs" style="left:0;top:22.8px;width:334px;height:0.6px;background:#e3e3e3"></div>
<svg class="abs" style="left:1.5px;top:25.4px" width="7" height="6" viewBox="0 0 7 6"><path d="M0.3 3L3.3 0.4V2H6.7V4H3.3V5.6Z" fill="#9a9a9a"/></svg>
<svg class="abs" style="left:11.6px;top:25.4px" width="7" height="6" viewBox="0 0 7 6"><path d="M6.7 3L3.7 0.4V2H0.3V4H3.7V5.6Z" fill="#9a9a9a"/></svg>
<div class="abs" style="left:21.3px;top:24.6px;width:0.6px;height:8px;background:#cfcfcf"></div>
<div class="abs" style="left:35.5px;top:24.6px;width:0.6px;height:8px;background:#cfcfcf"></div>
<div class="abs" style="left:58.3px;top:24.6px;width:0.6px;height:8px;background:#cfcfcf"></div>
<div class="abs" style="left:71.7px;top:24.6px;width:0.6px;height:8px;background:#cfcfcf"></div>
<svg class="abs" style="left:24.6px;top:25.2px" width="8" height="7" viewBox="0 0 8 7"><rect x="0.3" y="0.5" width="7.4" height="6" fill="#f4f6f8" stroke="#8f979f" stroke-width="0.6"/><rect x="0.3" y="0.5" width="7.4" height="1.6" fill="#9aa3ad"/><path d="M2.8 2.1V6.5M5.2 2.1V6.5M0.3 4.2H7.7" stroke="#aab2ba" stroke-width="0.5"/></svg>
<svg class="abs" style="left:38.6px;top:24.8px" width="7" height="8" viewBox="0 0 7 8"><rect x="0.4" y="0.3" width="6" height="7.2" fill="#2f62b8"/><rect x="2.6" y="1.3" width="1.6" height="4.6" fill="#e9f0fb"/><rect x="0.4" y="6.6" width="6" height="0.9" fill="#9fb4d6"/></svg>
<svg class="abs" style="left:47.8px;top:25.2px" width="8" height="7" viewBox="0 0 8 7"><rect x="0.3" y="0.5" width="7.4" height="6" fill="#f4f6f8" stroke="#8f979f" stroke-width="0.6"/><rect x="0.3" y="0.5" width="7.4" height="1.6" fill="#9aa3ad"/><path d="M2.8 2.1V6.5M5.2 2.1V6.5M0.3 4.2H7.7" stroke="#aab2ba" stroke-width="0.5"/></svg>
<svg class="abs" style="left:61.2px;top:25.2px" width="8" height="7" viewBox="0 0 8 7"><rect x="0.3" y="1" width="6" height="4.6" fill="#eef2ee" stroke="#8c9a8c" stroke-width="0.6"/><circle cx="5.6" cy="4.4" r="2" fill="#3fae49"/><rect x="1.4" y="6" width="3.6" height="0.7" fill="#9aa39a"/></svg>
<svg class="abs" style="left:74.4px;top:25.0px" width="8" height="8" viewBox="0 0 8 8"><rect x="0.4" y="0.5" width="7" height="4.8" fill="#5aa6e6" stroke="#2f78c4" stroke-width="0.6"/><rect x="3.2" y="5.3" width="1.5" height="1.2" fill="#7f8a96"/><rect x="2" y="6.5" width="4" height="0.8" fill="#7f8a96"/></svg>
<div class="abs" style="left:1.6px;top:35.0px;width:330.4px;height:199px;border:0.6px solid #c4c8cc;border-top:0.9px solid #a2a4a8;border-right:none;box-sizing:border-box;background:#fff"></div>
<div class="abs" style="left:326px;top:35.6px;width:6.4px;height:198px;background:#ededed"></div>
<div class="abs" style="left:329px;top:117.8px;width:1px;height:108px;background:#6e6e6e;border-radius:0.5px"></div>
<div class="abs" style="left:0;top:234.0px;width:334px;height:11px;background:#f0f0f0"></div>
<div class="abs" style="left:296px;top:235.3px;width:0.6px;height:8px;background:#d4d4d4"></div>
<svg class="abs" style="left:12px;top:37.55px" width="4" height="5" viewBox="0 0 4 5"><path d="M1 0.6L3 2.5L1 4.4" fill="none" stroke="#9a9a9a" stroke-width="0.6"/></svg>
<svg class="abs" style="left:19.3px;top:36.65px" width="6" height="6.4" viewBox="0 0 6 6.4"><rect x="1.6" y="0.4" width="2.8" height="3.4" fill="#5d5d5d"/><rect x="1" y="2.2" width="4" height="2.6" fill="#767676"/><rect x="2.5" y="4.8" width="1" height="1.6" fill="#4a4a4a"/></svg>
<div class="row" style="left:27.7px;top:36.75px">Порты (COM и LPT)</div>
<svg class="abs" style="left:12px;top:45.3px" width="4" height="5" viewBox="0 0 4 5"><path d="M1 0.6L3 2.5L1 4.4" fill="none" stroke="#9a9a9a" stroke-width="0.6"/></svg>
<svg class="abs" style="left:19.3px;top:44.4px" width="6" height="6.4" viewBox="0 0 6 6.4"><rect x="1.6" y="0.3" width="2.8" height="5.6" fill="#b9bdc2" stroke="#7e848b" stroke-width="0.5"/><rect x="2.2" y="1" width="1.6" height="0.8" fill="#6f767d"/></svg>
<div class="row" style="left:27.7px;top:44.5px">Программные устройства</div>
<svg class="abs" style="left:12px;top:53.05px" width="4" height="5" viewBox="0 0 4 5"><path d="M1 0.6L3 2.5L1 4.4" fill="none" stroke="#9a9a9a" stroke-width="0.6"/></svg>
<svg class="abs" style="left:19.3px;top:52.15px" width="6" height="6.4" viewBox="0 0 6 6.4"><rect x="0.6" y="0.6" width="4.8" height="4.8" fill="#fff" stroke="#3b6b3b" stroke-width="1.1"/></svg>
<div class="row" style="left:27.7px;top:52.25px">Процессоры</div>
<svg class="abs" style="left:12px;top:60.8px" width="4" height="5" viewBox="0 0 4 5"><path d="M1 0.6L3 2.5L1 4.4" fill="none" stroke="#9a9a9a" stroke-width="0.6"/></svg>
<svg class="abs" style="left:19.3px;top:59.9px" width="6" height="6.4" viewBox="0 0 6 6.4"><rect x="0.3" y="0.6" width="5.2" height="3.6" fill="#4aa8e0" stroke="#2d7db8" stroke-width="0.5"/><rect x="1.4" y="4.6" width="3" height="0.8" fill="#4d8a5c"/><circle cx="4.8" cy="4.6" r="1.1" fill="#47b36b"/></svg>
<div class="row" style="left:27.7px;top:60.0px">Сетевые адаптеры</div>
<svg class="abs" style="left:12px;top:68.55px" width="4" height="5" viewBox="0 0 4 5"><path d="M1 0.6L3 2.5L1 4.4" fill="none" stroke="#9a9a9a" stroke-width="0.6"/></svg>
<svg class="abs" style="left:19.3px;top:67.65px" width="6" height="6.4" viewBox="0 0 6 6.4"><rect x="0.3" y="0.8" width="5.4" height="4.6" fill="#1d3f6e"/><rect x="2" y="2.2" width="3.2" height="2.4" fill="#dfeefa"/><rect x="0.3" y="0.3" width="2.4" height="1" fill="#5aa0de"/></svg>
<div class="row" style="left:27.7px;top:67.75px">Системные устройства</div>
<svg class="abs" style="left:11.2px;top:76.7px" width="5" height="4" viewBox="0 0 5 4"><path d="M0.6 1L2.5 3L4.4 1" fill="none" stroke="#404040" stroke-width="0.7"/></svg>
<svg class="abs" style="left:19.3px;top:75.4px" width="7" height="6.4" viewBox="0 0 7 6.4"><rect x="0.2" y="1.2" width="6.8" height="4" rx="0.4" fill="#7c7f83"/><rect x="0.8" y="0.5" width="2.6" height="2.2" fill="#a9adb2"/><rect x="4" y="1.8" width="2.4" height="1.1" fill="#d7dadd"/><path d="M1 4.2H6.2" stroke="#d0d3d6" stroke-width="0.6" stroke-dasharray="0.8 0.5"/></svg>
<div class="row" style="left:27.7px;top:75.5px">Устройства HID (Human Interface Devices)</div>
<svg class="abs" style="left:26.2px;top:83.15px" width="7" height="6.4" viewBox="0 0 7 6.4"><rect x="0.2" y="1.2" width="6.8" height="4" rx="0.4" fill="#7c7f83"/><rect x="0.8" y="0.5" width="2.6" height="2.2" fill="#a9adb2"/><rect x="4" y="1.8" width="2.4" height="1.1" fill="#d7dadd"/><path d="M1 4.2H6.2" stroke="#d0d3d6" stroke-width="0.6" stroke-dasharray="0.8 0.5"/></svg>
<div class="row" style="left:35.5px;top:83.25px">HID-совместимое устройство</div>
<svg class="abs" style="left:26.2px;top:90.9px" width="7" height="6.4" viewBox="0 0 7 6.4"><rect x="0.2" y="1.2" width="6.8" height="4" rx="0.4" fill="#7c7f83"/><rect x="0.8" y="0.5" width="2.6" height="2.2" fill="#a9adb2"/><rect x="4" y="1.8" width="2.4" height="1.1" fill="#d7dadd"/><path d="M1 4.2H6.2" stroke="#d0d3d6" stroke-width="0.6" stroke-dasharray="0.8 0.5"/></svg>
<div class="row" style="left:35.5px;top:91.0px">HID-совместимое устройство</div>
<svg class="abs" style="left:26.2px;top:98.65px" width="7" height="6.4" viewBox="0 0 7 6.4"><rect x="0.2" y="1.2" width="6.8" height="4" rx="0.4" fill="#7c7f83"/><rect x="0.8" y="0.5" width="2.6" height="2.2" fill="#a9adb2"/><rect x="4" y="1.8" width="2.4" height="1.1" fill="#d7dadd"/><path d="M1 4.2H6.2" stroke="#d0d3d6" stroke-width="0.6" stroke-dasharray="0.8 0.5"/></svg>
<div class="row" style="left:35.5px;top:98.75px">HID-совместимое устройство управления</div>
<svg class="abs" style="left:26.2px;top:106.4px" width="7" height="6.4" viewBox="0 0 7 6.4"><rect x="0.2" y="1.2" width="6.8" height="4" rx="0.4" fill="#7c7f83"/><rect x="0.8" y="0.5" width="2.6" height="2.2" fill="#a9adb2"/><rect x="4" y="1.8" width="2.4" height="1.1" fill="#d7dadd"/><path d="M1 4.2H6.2" stroke="#d0d3d6" stroke-width="0.6" stroke-dasharray="0.8 0.5"/></svg>
<div class="row" style="left:35.5px;top:106.5px">HID-совместимое устройство управления</div>
<svg class="abs" style="left:26.2px;top:114.15px" width="7" height="6.4" viewBox="0 0 7 6.4"><rect x="0.2" y="1.2" width="6.8" height="4" rx="0.4" fill="#7c7f83"/><rect x="0.8" y="0.5" width="2.6" height="2.2" fill="#a9adb2"/><rect x="4" y="1.8" width="2.4" height="1.1" fill="#d7dadd"/><path d="M1 4.2H6.2" stroke="#d0d3d6" stroke-width="0.6" stroke-dasharray="0.8 0.5"/></svg>
<div class="row" style="left:35.5px;top:114.25px">HID-совместимое устройство управления</div>
<svg class="abs" style="left:26.2px;top:121.9px" width="7" height="6.4" viewBox="0 0 7 6.4"><rect x="0.2" y="1.2" width="6.8" height="4" rx="0.4" fill="#7c7f83"/><rect x="0.8" y="0.5" width="2.6" height="2.2" fill="#a9adb2"/><rect x="4" y="1.8" width="2.4" height="1.1" fill="#d7dadd"/><path d="M1 4.2H6.2" stroke="#d0d3d6" stroke-width="0.6" stroke-dasharray="0.8 0.5"/></svg>
<div class="row" style="left:35.5px;top:122.0px">HID-совместимое устройство, определенное поставщиком</div>
<svg class="abs" style="left:26.2px;top:129.65px" width="7" height="6.4" viewBox="0 0 7 6.4"><rect x="0.2" y="1.2" width="6.8" height="4" rx="0.4" fill="#7c7f83"/><rect x="0.8" y="0.5" width="2.6" height="2.2" fill="#a9adb2"/><rect x="4" y="1.8" width="2.4" height="1.1" fill="#d7dadd"/><path d="M1 4.2H6.2" stroke="#d0d3d6" stroke-width="0.6" stroke-dasharray="0.8 0.5"/></svg>
<div class="row" style="left:35.5px;top:129.75px">HID-совместимый системный контроллер</div>
<svg class="abs" style="left:26.2px;top:137.4px" width="7" height="6.4" viewBox="0 0 7 6.4"><rect x="0.2" y="1.2" width="6.8" height="4" rx="0.4" fill="#7c7f83"/><rect x="0.8" y="0.5" width="2.6" height="2.2" fill="#a9adb2"/><rect x="4" y="1.8" width="2.4" height="1.1" fill="#d7dadd"/><path d="M1 4.2H6.2" stroke="#d0d3d6" stroke-width="0.6" stroke-dasharray="0.8 0.5"/></svg>
<div class="row" style="left:35.5px;top:137.5px">HID-совместимый системный контроллер</div>
<svg class="abs" style="left:26.2px;top:145.15px" width="7" height="6.4" viewBox="0 0 7 6.4"><rect x="0.2" y="1.2" width="6.8" height="4" rx="0.4" fill="#7c7f83"/><rect x="0.8" y="0.5" width="2.6" height="2.2" fill="#a9adb2"/><rect x="4" y="1.8" width="2.4" height="1.1" fill="#d7dadd"/><path d="M1 4.2H6.2" stroke="#d0d3d6" stroke-width="0.6" stroke-dasharray="0.8 0.5"/></svg>
<div class="row" style="left:35.5px;top:145.25px">Logitech MOMO Racing (HID)</div>
<svg class="abs" style="left:26.2px;top:152.9px" width="7" height="6.4" viewBox="0 0 7 6.4"><rect x="0.2" y="1.2" width="6.8" height="4" rx="0.4" fill="#7c7f83"/><rect x="0.8" y="0.5" width="2.6" height="2.2" fill="#a9adb2"/><rect x="4" y="1.8" width="2.4" height="1.1" fill="#d7dadd"/><path d="M1 4.2H6.2" stroke="#d0d3d6" stroke-width="0.6" stroke-dasharray="0.8 0.5"/></svg>
<div class="row" style="left:35.5px;top:153.0px">Logitech MOMO Racing USB</div>
<svg class="abs" style="left:26.2px;top:160.65px" width="7" height="6.4" viewBox="0 0 7 6.4"><rect x="0.2" y="1.2" width="6.8" height="4" rx="0.4" fill="#7c7f83"/><rect x="0.8" y="0.5" width="2.6" height="2.2" fill="#a9adb2"/><rect x="4" y="1.8" width="2.4" height="1.1" fill="#d7dadd"/><path d="M1 4.2H6.2" stroke="#d0d3d6" stroke-width="0.6" stroke-dasharray="0.8 0.5"/></svg>
<div class="row" style="left:35.5px;top:160.75px">Logitech Virtual Hid Device</div>
<svg class="abs" style="left:26.2px;top:168.4px" width="7" height="6.4" viewBox="0 0 7 6.4"><rect x="0.2" y="1.2" width="6.8" height="4" rx="0.4" fill="#7c7f83"/><rect x="0.8" y="0.5" width="2.6" height="2.2" fill="#a9adb2"/><rect x="4" y="1.8" width="2.4" height="1.1" fill="#d7dadd"/><path d="M1 4.2H6.2" stroke="#d0d3d6" stroke-width="0.6" stroke-dasharray="0.8 0.5"/></svg>
<div class="row" style="left:35.5px;top:168.5px">Logitech Virtual Hid Device</div>
<svg class="abs" style="left:26.2px;top:176.15px" width="7" height="6.4" viewBox="0 0 7 6.4"><rect x="0.2" y="1.2" width="6.8" height="4" rx="0.4" fill="#7c7f83"/><rect x="0.8" y="0.5" width="2.6" height="2.2" fill="#a9adb2"/><rect x="4" y="1.8" width="2.4" height="1.1" fill="#d7dadd"/><path d="M1 4.2H6.2" stroke="#d0d3d6" stroke-width="0.6" stroke-dasharray="0.8 0.5"/></svg>
<div class="row" style="left:35.5px;top:176.25px">Razer Cynosa Lite</div>
<svg class="abs" style="left:26.2px;top:183.9px" width="7" height="6.4" viewBox="0 0 7 6.4"><rect x="0.2" y="1.2" width="6.8" height="4" rx="0.4" fill="#7c7f83"/><rect x="0.8" y="0.5" width="2.6" height="2.2" fill="#a9adb2"/><rect x="4" y="1.8" width="2.4" height="1.1" fill="#d7dadd"/><path d="M1 4.2H6.2" stroke="#d0d3d6" stroke-width="0.6" stroke-dasharray="0.8 0.5"/></svg>
<div class="row" style="left:35.5px;top:184.0px">Razer Cynosa Lite</div>
<svg class="abs" style="left:26.2px;top:191.65px" width="7" height="6.4" viewBox="0 0 7 6.4"><rect x="0.2" y="1.2" width="6.8" height="4" rx="0.4" fill="#7c7f83"/><rect x="0.8" y="0.5" width="2.6" height="2.2" fill="#a9adb2"/><rect x="4" y="1.8" width="2.4" height="1.1" fill="#d7dadd"/><path d="M1 4.2H6.2" stroke="#d0d3d6" stroke-width="0.6" stroke-dasharray="0.8 0.5"/></svg>
<div class="row" style="left:35.5px;top:191.75px">USB-устройство ввода</div>
<svg class="abs" style="left:26.2px;top:199.4px" width="7" height="6.4" viewBox="0 0 7 6.4"><rect x="0.2" y="1.2" width="6.8" height="4" rx="0.4" fill="#7c7f83"/><rect x="0.8" y="0.5" width="2.6" height="2.2" fill="#a9adb2"/><rect x="4" y="1.8" width="2.4" height="1.1" fill="#d7dadd"/><path d="M1 4.2H6.2" stroke="#d0d3d6" stroke-width="0.6" stroke-dasharray="0.8 0.5"/></svg>
<div class="row" style="left:35.5px;top:199.5px">USB-устройство ввода</div>
<svg class="abs" style="left:26.2px;top:207.15px" width="7" height="6.4" viewBox="0 0 7 6.4"><rect x="0.2" y="1.2" width="6.8" height="4" rx="0.4" fill="#7c7f83"/><rect x="0.8" y="0.5" width="2.6" height="2.2" fill="#a9adb2"/><rect x="4" y="1.8" width="2.4" height="1.1" fill="#d7dadd"/><path d="M1 4.2H6.2" stroke="#d0d3d6" stroke-width="0.6" stroke-dasharray="0.8 0.5"/></svg>
<div class="row" style="left:35.5px;top:207.25px">USB-устройство ввода</div>
<svg class="abs" style="left:26.2px;top:214.9px" width="7" height="6.4" viewBox="0 0 7 6.4"><rect x="0.2" y="1.2" width="6.8" height="4" rx="0.4" fill="#7c7f83"/><rect x="0.8" y="0.5" width="2.6" height="2.2" fill="#a9adb2"/><rect x="4" y="1.8" width="2.4" height="1.1" fill="#d7dadd"/><path d="M1 4.2H6.2" stroke="#d0d3d6" stroke-width="0.6" stroke-dasharray="0.8 0.5"/></svg>
<div class="row" style="left:35.5px;top:215.0px">USB-устройство ввода</div>
<svg class="abs" style="left:12px;top:223.55px" width="4" height="5" viewBox="0 0 4 5"><path d="M1 0.6L3 2.5L1 4.4" fill="none" stroke="#9a9a9a" stroke-width="0.6"/></svg>
<svg class="abs" style="left:19.3px;top:222.65px" width="6" height="6.4" viewBox="0 0 6 6.4"><rect x="0.6" y="0.5" width="4.8" height="5.2" fill="#3c3c34"/><rect x="1.5" y="1.2" width="3" height="3.8" fill="#c9b44a"/><rect x="2.3" y="2" width="1.4" height="2" fill="#4c4a30"/></svg>
<div class="row" style="left:27.7px;top:222.75px">Устройства безопасности</div>
</div>
<div id="tb">
<svg class="abs" style="left:203.60px;top:4.40px" width="10.4" height="10.8" viewBox="0 0 10.4 10.8"><defs><linearGradient id="wl" x1="0" y1="0" x2="1" y2="1"><stop offset="0" stop-color="#7fd6fb"/><stop offset="1" stop-color="#2a9df0"/></linearGradient></defs><rect x="0.2" y="0.2" width="4.7" height="4.9" rx="0.5" fill="url(#wl)"/><rect x="5.5" y="0.2" width="4.7" height="4.9" rx="0.5" fill="url(#wl)"/><rect x="0.2" y="5.7" width="4.7" height="4.9" rx="0.5" fill="url(#wl)"/><rect x="5.5" y="5.7" width="4.7" height="4.9" rx="0.5" fill="url(#wl)"/></svg>
<div class="abs" style="left:219.5px;top:2.6000000000000227px;width:93.6px;height:13.6px;border-radius:6.8px;background:#36559a;box-shadow:inset 0 0 0 0.5px rgba(255,255,255,0.08)"></div>
<svg class="abs" style="left:223.60px;top:6.40px" width="6.4" height="6.4" viewBox="0 0 6.4 6.4"><circle cx="2.7" cy="2.7" r="1.9" fill="none" stroke="#f2f5fa" stroke-width="0.85"/><path d="M4.1 4.1L5.8 5.8" stroke="#f2f5fa" stroke-width="0.95"/></svg>
<div class="t" style="left:235px;top:6.5px;font-size:5.8px">Поиск</div>
<svg class="abs" style="left:291.50px;top:5.60px" width="20" height="10.4" viewBox="0 0 20 10.4"><path d="M1 7.6C3 6.6 5 6.8 7 5.4C8.6 4.4 10 3.6 12 3.4L14 1.6L15.4 2.6L17.4 3.8L16.4 4.8L14.4 4.6C13.6 5.6 12.6 6.2 11.4 6.4L13 8L11.6 8.4L9.6 6.8C7.6 7.2 6 7.8 4.4 7.6L2.4 8.6Z" fill="#f4efe2"/><path d="M0.6 9.4C5 8.6 12 8.8 19 9.2" stroke="#d8b24a" stroke-width="1" fill="none"/><path d="M7 5.4L9 3.2L10.6 4.2" fill="#c8aa74"/></svg>
<svg class="abs" style="left:317.80px;top:4.60px" width="10" height="10.6" viewBox="0 0 10 10.6"><path d="M3 2.6V1.8C3 0.8 3.8 0.4 5 0.4C6.2 0.4 7 0.8 7 1.8V2.6" stroke="#e8eef6" stroke-width="0.8" fill="none"/><rect x="0.5" y="2.4" width="9" height="7.8" rx="1" fill="#f4f6fa"/><rect x="2.4" y="4" width="2.3" height="2.3" fill="#e8453a"/><rect x="5.3" y="4" width="2.3" height="2.3" fill="#58b84a"/><rect x="2.4" y="6.8" width="2.3" height="2.3" fill="#2a8ae8"/><rect x="5.3" y="6.8" width="2.3" height="2.3" fill="#f6be1e"/></svg>
<svg class="abs" style="left:336.80px;top:4.80px" width="11.6" height="10.4" viewBox="0 0 11.6 10.4"><defs><linearGradient id="cpg" x1="0" y1="0" x2="1" y2="1"><stop offset="0" stop-color="#c86af0"/><stop offset="1" stop-color="#6a2ed8"/></linearGradient></defs><path d="M0.6 3L10.6 0.6L11 3.2L1 5.4Z" fill="#b45ae8"/><rect x="0.8" y="4.2" width="10.2" height="5.8" rx="0.8" fill="url(#cpg)"/><path d="M3 1.8L4.6 3.8M6 1.2L7.6 3.2M8.8 0.8L10 2.6" stroke="#f0d6fb" stroke-width="0.8"/></svg>
<svg class="abs" style="left:355.60px;top:4.40px" width="11" height="11" viewBox="0 0 11 11"><circle cx="5.5" cy="5.5" r="5.2" fill="#1aa7ec"/><path d="M7.4 3.8C6.8 2.8 4 2.6 3.8 4.2C3.6 5.8 7.4 5.2 7.2 7C7 8.6 4.2 8.4 3.4 7.2" stroke="#fff" stroke-width="1.2" fill="none" stroke-linecap="round"/></svg>
<svg class="abs" style="left:374.80px;top:4.20px" width="11.4" height="11.4" viewBox="0 0 11.4 11.4"><circle cx="5.7" cy="5.7" r="5.4" fill="#6f82e8"/><path d="M2.8 3.8C4.4 3 7 3 8.6 3.8C9.4 5.2 9.6 6.6 9.4 7.8C8.6 8.4 8 8.6 7.4 8.6L7 7.8H4.4L4 8.6C3.4 8.6 2.8 8.4 2 7.8C1.8 6.6 2 5.2 2.8 3.8Z" fill="#f2f4fc"/><circle cx="4.4" cy="6" r="0.8" fill="#6f82e8"/><circle cx="7" cy="6" r="0.8" fill="#6f82e8"/></svg>
<svg class="abs" style="left:393.60px;top:4.40px" width="11.2" height="10.4" viewBox="0 0 11.2 10.4"><path d="M1 2.4Q1 0.6 2.8 0.6H8.4Q10.2 0.6 10.2 2.4V7.4Q10.2 9.8 8 9.8H3.2Q1 9.8 1 7.4Z" fill="#1c3fe0"/><rect x="0.2" y="3.2" width="10.8" height="4" rx="2" fill="#2a55f0"/><circle cx="3.8" cy="5.2" r="1.2" fill="#f4f6ff"/><circle cx="7.4" cy="5.2" r="1.2" fill="#f4f6ff"/></svg>
<svg class="abs" style="left:413.00px;top:4.40px" width="10.6" height="10.6" viewBox="0 0 10.6 10.6"><circle cx="5.3" cy="5.3" r="4.9" fill="#c8ccd0"/><circle cx="5.3" cy="5.3" r="3.6" fill="#e8d48a"/><circle cx="5.3" cy="5.3" r="2" fill="#4a5058"/><path d="M5.3 0.6V3.4M5.3 7.2V10M0.6 5.3H3.4M7.2 5.3H10" stroke="#6a7078" stroke-width="0.8"/><circle cx="5.3" cy="5.3" r="4.9" fill="none" stroke="#8a9098" stroke-width="0.7"/></svg>
<svg class="abs" style="left:431.40px;top:4.20px" width="11.4" height="11.4" viewBox="0 0 11.4 11.4"><circle cx="5.7" cy="5.7" r="5.4" fill="#e8f0f8"/><path d="M5.7 5.7L1 3A5.4 5.4 0 0 1 10.4 3Z" fill="#e6453a"/><path d="M5.7 5.7L10.4 3A5.4 5.4 0 0 1 5.7 11.1Z" fill="#f6c21e"/><path d="M5.7 5.7L5.7 11.1A5.4 5.4 0 0 1 1 3Z" fill="#3aa84e"/><circle cx="5.7" cy="5.7" r="2.5" fill="#f4f7fb"/><circle cx="5.7" cy="5.7" r="1.9" fill="#3a7fe8"/></svg>
<svg class="abs" style="left:451.00px;top:4.80px" width="8.6" height="10" viewBox="0 0 8.6 10"><path d="M0.4 0.4H8.2V7.4L4.3 9.6L0.4 7.4Z" fill="#121214" stroke="#3a3a40" stroke-width="0.4"/><path d="M2 2H3.6M2 2V5.4M2 3.6H3.2M2 5.4H3.6M4.4 2V5.4M4.4 2H5.2Q6 2 6 2.9Q6 3.8 5.2 3.8H4.4M6.8 2V5.4" stroke="#f2f2f4" stroke-width="0.55" fill="none"/><path d="M2.4 7.2H6.2" stroke="#f2f2f4" stroke-width="0.5"/></svg>
<svg class="abs" style="left:470.40px;top:4.80px" width="8.8" height="10" viewBox="0 0 8.8 10"><rect x="0.3" y="0.3" width="8.2" height="9.4" rx="0.8" fill="#2a1416"/><path d="M2.4 1.2H6.6L5.8 4.4H7.2L3 9L4 5.4H2Z" fill="#d8262a"/></svg>
<svg class="abs" style="left:487.80px;top:5.20px" width="11.2" height="9" viewBox="0 0 11.2 9"><rect x="0.4" y="0.4" width="10.4" height="7.4" rx="0.6" fill="#4aa6e8" stroke="#2a6fb8" stroke-width="0.5"/><circle cx="3.6" cy="3.8" r="2" fill="#e8f4fc"/><path d="M3.6 3.8V1.8A2 2 0 0 1 5.6 3.8Z" fill="#f0b63a"/><rect x="6.6" y="2" width="3.2" height="0.9" fill="#e8f4fc"/><rect x="6.6" y="3.8" width="3.2" height="0.9" fill="#e8f4fc"/><rect x="1.4" y="6.2" width="8.4" height="0.8" fill="#dcecf8"/></svg>
<div class="abs" style="left:491.8px;top:16.600000000000023px;width:3.4px;height:1px;border-radius:0.5px;background:#9aa6b8"></div>
<div class="abs" style="left:503.6px;top:2px;width:17.8px;height:16.4px;border-radius:2px;background:rgba(255,255,255,0.09)"></div>
<svg class="abs" style="left:507.00px;top:4.60px" width="11" height="10.4" viewBox="0 0 11 10.4"><rect x="3" y="0.6" width="7.4" height="6" fill="#dfe5ec" stroke="#8a949e" stroke-width="0.5"/><rect x="3.8" y="1.4" width="5.8" height="3.8" fill="#7a8590"/><rect x="0.5" y="4.4" width="7.6" height="5" rx="0.5" fill="#cfd6de" stroke="#7a848e" stroke-width="0.5"/><rect x="1.4" y="5.4" width="5.6" height="1.4" fill="#f2f5f8"/><rect x="1.4" y="7.6" width="3" height="0.8" fill="#8a949e"/></svg>
<div class="abs" style="left:508.6px;top:16.600000000000023px;width:7px;height:1.1px;border-radius:0.5px;background:#76b4f0"></div>
<svg class="abs" style="left:579.60px;top:8.00px" width="5" height="3.6" viewBox="0 0 5 3.6"><path d="M0.6 2.9L2.5 0.9L4.4 2.9" fill="none" stroke="#e8eef8" stroke-width="0.75"/></svg>
<svg class="abs" style="left:595.80px;top:6.60px" width="4.6" height="6" viewBox="0 0 4.6 6"><path d="M1 0.4H3.6L3.2 2.6H4L1.8 5.6L2.2 3.4H0.8Z" fill="#d8282e"/></svg>
<svg class="abs" style="left:606.60px;top:5.80px" width="7.4" height="7.4" viewBox="0 0 7.4 7.4"><circle cx="3.7" cy="3.7" r="3.4" fill="#2ed14a"/><path d="M2 2.6H5.4L3.7 5.6Z" fill="#0f5a24"/></svg>
<svg class="abs" style="left:619.80px;top:5.80px" width="7" height="7.4" viewBox="0 0 7 7.4"><path d="M0.5 0.8H6.5L5.4 4.8L3.5 7L1.6 4.8Z" fill="#3ab0f0"/><path d="M2 1.8L3.5 5L5 1.8" stroke="#e8f6fe" stroke-width="0.8" fill="none"/></svg>
<div class="t" style="left:635.2px;top:7px;font-size:4.6px">РУС</div>
<svg class="abs" style="left:652.40px;top:5.40px" width="6.6" height="7" viewBox="0 0 6.6 7"><rect x="0.5" y="0.8" width="4.8" height="4" fill="none" stroke="#eef2fa" stroke-width="0.7"/><path d="M1.6 6.2H4.2M2.9 4.8V6.2" stroke="#eef2fa" stroke-width="0.7"/><circle cx="5.2" cy="1.4" r="1.2" fill="#0c3070" stroke="#eef2fa" stroke-width="0.5"/></svg>
<svg class="abs" style="left:662.40px;top:7.00px" width="6" height="5.6" viewBox="0 0 6 5.6"><path d="M0.5 1.9H1.8L3.4 0.5V5.1L1.8 3.7H0.5Z" fill="none" stroke="#eef2fa" stroke-width="0.6"/><path d="M4.3 1.6Q5.2 2.8 4.3 4" fill="none" stroke="#eef2fa" stroke-width="0.55"/></svg>
<div class="t" style="left:672px;width:29.2px;text-align:right;top:2.8000000000000114px">9:12</div>
<div class="t" style="left:672px;width:29.2px;text-align:right;top:10.300000000000011px">30.04.2024</div>
<svg class="abs" style="left:704.80px;top:6.20px" width="6.6" height="7" viewBox="0 0 6.6 7"><path d="M1 4.8C1.6 4 1.4 2.8 1.8 1.9C2.1 1.1 2.6 0.7 3.3 0.7C4 0.7 4.5 1.1 4.8 1.9C5.2 2.8 5 4 5.6 4.8Z" fill="none" stroke="#eef2fa" stroke-width="0.65"/><path d="M2.6 5.6Q3.3 6.4 4 5.6" fill="none" stroke="#eef2fa" stroke-width="0.6"/></svg>
</div>
<svg class="abs" style="left:606px;top:406px" width="110" height="36" viewBox="606 406 110 36"><g fill="#f0f2f8" fill-opacity="0.62"><circle cx="623.3" cy="416.5" r="3.1"/><circle cx="633" cy="417.8" r="5.7"/><circle cx="621.1" cy="427.8" r="7.5"/><circle cx="635.3" cy="429.7" r="4.4"/><text transform="translate(641.8 433.5) scale(1.0 1)" x="0" y="0" font-family="Liberation Sans, sans-serif" font-weight="700" font-size="27.2">Avito</text></g></svg>
</div>
</body>
</html>
